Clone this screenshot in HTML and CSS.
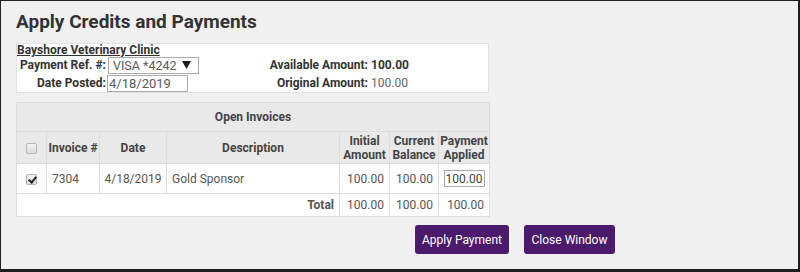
FILE: index.html
```html
<!DOCTYPE html>
<html>
<head>
<meta charset="utf-8">
<link rel="stylesheet" href="styles.css">
</head>
<body>
<div class="frame">
  <h1 class="title">Apply Credits and Payments</h1>
  <div class="info">
    <div class="client">Bayshore Veterinary Clinic</div>
    <div class="lbl">Payment Ref. #:</div>
    <div class="ctl">
      <span class="selwrap">
        <select class="sel"><option>VISA *4242</option></select>
        <svg class="arrow" width="9" height="8" viewBox="0 0 9 8"><path d="M0 0H9L4.5 8Z" fill="#1a1a1a"/></svg>
      </span>
    </div>
    <div class="lbl2">Available Amount:</div>
    <div class="val strong">100.00</div>
    <div class="lbl">Date Posted:</div>
    <div class="ctl"><input class="date" type="text" value="4/18/2019"></div>
    <div class="lbl2">Original Amount:</div>
    <div class="val">100.00</div>
  </div>

  <table class="inv">
    <colgroup>
      <col class="c1"><col class="c2"><col class="c3"><col class="c4"><col class="c5"><col class="c6"><col class="c7">
    </colgroup>
    <thead>
      <tr class="cap"><th colspan="7">Open Invoices</th></tr>
      <tr class="heads">
        <th><input type="checkbox" class="cb"></th>
        <th>Invoice #</th>
        <th>Date</th>
        <th>Description</th>
        <th>Initial<br>Amount</th>
        <th>Current<br>Balance</th>
        <th>Payment<br>Applied</th>
      </tr>
    </thead>
    <tbody>
      <tr class="row">
        <td class="center"><input type="checkbox" class="cb" checked></td>
        <td>7304</td>
        <td class="center">4/18/2019</td>
        <td>Gold Sponsor</td>
        <td class="num">100.00</td>
        <td class="num">100.00</td>
        <td class="center"><input class="pay" type="text" value="100.00"></td>
      </tr>
      <tr class="total">
        <td colspan="4" class="num totlbl">Total</td>
        <td class="num">100.00</td>
        <td class="num">100.00</td>
        <td class="num">100.00</td>
      </tr>
    </tbody>
  </table>

  <div class="actions">
    <button class="btn">Apply Payment</button>
    <button class="btn">Close Window</button>
  </div>
</div>
</body>
</html>
```

FILE: styles.css
```css
* { box-sizing: border-box; }
html, body { margin: 0; padding: 0; }
body { font-family: Roboto, "Liberation Sans", Arial, sans-serif; }

.frame {
  width: 800px;
  height: 272px;
  background: #f0f0f0;
  border-style: solid;
  border-color: #1e1e1e;
  border-width: 1px 2px 3px 1px;
  padding: 9px 0 0 15px;
  color: #444;
  font-size: 12px;
}

.title {
  margin: 0;
  font-size: 19px;
  line-height: 24px;
  font-weight: 700;
  color: #333;
}

.info {
  margin-top: 9px;
  width: 473px;
  background: #fff;
  border: 1px solid #e2e2e2;
  display: grid;
  grid-template-columns: 90px 156px 108px 1fr;
  grid-template-rows: 12px 18px 18px;
  align-items: center;
  white-space: nowrap;
}
.client {
  grid-column: 1 / -1;
  font-weight: 700;
  text-decoration: underline;
  color: #333;
  line-height: 12px;
}
.lbl, .lbl2 {
  text-align: right;
  font-weight: 700;
  color: #333;
  padding-right: 1px;
}
.lbl2 { padding-right: 3px; }
.val { color: #666; }
.val.strong { font-weight: 700; color: #333; }

.selwrap { position: relative; display: inline-block; margin-left: 1px; vertical-align: top; }
.sel {
  appearance: none;
  -webkit-appearance: none;
  width: 91px;
  height: 17px;
  border: 1px solid #aaa;
  border-radius: 0;
  background: #fff;
  font-family: inherit;
  font-size: 12.5px;
  line-height: 15px;
  color: #5a5a5a;
  padding: 0 0 0 4px;
  display: block;
}
.arrow {
  position: absolute;
  right: 8px;
  top: 4px;
  pointer-events: none;
}
.date {
  display: block;
  width: 81px;
  height: 17px;
  border: 1px solid #aaa;
  font-family: inherit;
  font-size: 13px;
  color: #5a5a5a;
  padding: 0 0 0 1px;
  margin: 0;
}

.inv {
  margin-top: 9px;
  width: 473px;
  border-collapse: collapse;
  table-layout: fixed;
  background: #fff;
  border: 1px solid #dcdcdc;
}
.c1 { width: 30px; } .c2 { width: 53px; } .c3 { width: 67px; } .c4 { width: 173px; }
.c5 { width: 50px; } .c6 { width: 49px; } .c7 { width: 51px; }

.inv th, .inv td {
  border: 1px solid #dcdcdc;
  padding: 0 5px;
  font-size: 12px;
  white-space: nowrap;
}
.inv th { background: #e9e9e9; font-weight: 700; color: #444; text-align: center; }
.cap th { height: 29px; }
.heads th { height: 32px; line-height: 14px; padding: 0; }
.row td { height: 30px; color: #555; }
.total td { height: 23px; color: #555; }
.totlbl { font-weight: 700; color: #444; }
.center { text-align: center; }
.num { text-align: right; }
.inv .row td.center { padding: 0 2px; }

.cb {
  appearance: none;
  -webkit-appearance: none;
  width: 11px;
  height: 11px;
  margin: 0;
  border: 1px solid #b4b4b4;
  border-radius: 2px;
  background: linear-gradient(#f4f4f4, #dcdcdc);
  vertical-align: middle;
  position: relative;
}
.cb:checked::after {
  content: "";
  position: absolute;
  left: 3px;
  top: 0px;
  width: 3px;
  height: 6px;
  border: solid #222;
  border-width: 0 2px 2px 0;
  transform: rotate(40deg);
}

.pay {
  width: 41px;
  height: 17px;
  border: 1px solid #aaa;
  font-family: inherit;
  font-size: 12px;
  color: #444;
  text-align: right;
  padding: 0 1px 0 0;
  margin: 0;
  vertical-align: middle;
}

.actions {
  display: flex;
  gap: 15px;
  margin-top: 8px;
  padding-left: 399px;
}
.btn {
  height: 29px;
  padding: 0 7px;
  border: none;
  border-radius: 3px;
  background: #4b1a6c;
  color: #fff;
  font-family: inherit;
  font-size: 12px;
}
.btn:first-child { width: 94px; }
.btn:last-child { width: 91px; }
```
